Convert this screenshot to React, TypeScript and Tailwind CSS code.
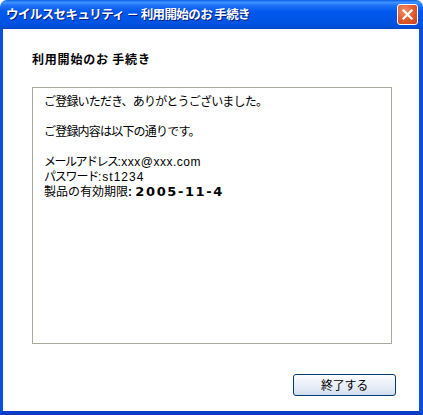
import React from "react";

const font = '"MS UI Gothic", "Noto Sans CJK JP", "Noto Sans", sans-serif';
const latin = '"Liberation Sans", "Noto Sans CJK JP", sans-serif';
const boldLatin = '"DejaVu Sans", "Liberation Sans", sans-serif';

export default function App() {
  return (
    <div className="w-[423px] h-[415px] flex flex-col bg-white" style={{ fontFamily: font }}>
      {/* Title bar */}
      <div className="h-[29px] shrink-0 rounded-t-[7px] flex items-center justify-between pl-[6px] pr-[5px] bg-[linear-gradient(to_bottom,#0a5ce8_0%,#3f94ff_8%,#1c6ff5_20%,#0058ee_40%,#0055e6_70%,#0050dc_90%,#0845c4_100%)]">
        <span className="text-white font-bold text-[12.5px] tracking-[-0.6px] [text-shadow:1px_1px_0_#0a1e7a] whitespace-pre">
          ウイルスセキュリティ － 利用開始のお 手続き
        </span>
        <div className="w-[21px] h-[21px] rounded-[3px] border border-white flex items-center justify-center bg-[radial-gradient(circle_at_35%_30%,#f0906a_0%,#e0582c_55%,#c7401a_100%)]">
          <svg width="13" height="13" viewBox="0 0 13 13">
            <path d="M2.5 2.5 L10.5 10.5 M10.5 2.5 L2.5 10.5" stroke="white" strokeWidth="2.2" strokeLinecap="square" />
          </svg>
        </div>
      </div>
      {/* Body */}
      <div className="flex-1 flex flex-col border-l-[3px] border-r-[4px] border-b-[4px] border-l-[#0b4fe0] border-r-[#0b4fe0] border-b-[#0a3cc4] bg-white">
        <div className="pl-[29px] pt-[22px] text-[12px] leading-[15px] font-bold text-black tracking-[0.8px] whitespace-pre">
          利用開始のお 手続き
        </div>
        <div className="ml-[29px] mt-[21px] w-[360px] h-[257px] border border-[#aca899] pt-[5px] pl-[11px] text-[12px] leading-[15px] text-black tracking-[-0.8px]">
          <div>ご登録いただき、ありがとうございました。</div>
          <div className="h-[15px]" />
          <div>ご登録内容は以下の通りです。</div>
          <div className="h-[15px]" />
          <div className="h-[15px] whitespace-nowrap">
            <span className="tracking-[-1.5px]">メールアドレス</span>
            <span className="tracking-[0.5px]" style={{ fontFamily: latin }}>:xxx@xxx.com</span>
          </div>
          <div className="h-[15px] whitespace-nowrap">
            <span className="tracking-[-1.2px]">パスワード</span>
            <span className="tracking-[1px]" style={{ fontFamily: latin }}>:st1234</span>
          </div>
          <div className="h-[15px] whitespace-nowrap">
            <span className="tracking-[0px]">製品の有効期限</span>
            <span className="font-bold tracking-[0px]" style={{ fontFamily: latin }}>: </span>
            <span className="font-bold text-[13px] tracking-[1.6px]" style={{ fontFamily: boldLatin }}>2005-11-4</span>
          </div>
        </div>
        <div className="flex justify-end pr-[23px] mt-[30px]">
          <button className="w-[103px] h-[22px] rounded-[3px] border border-[#003c74] bg-[linear-gradient(to_bottom,#ffffff_0%,#f0f3fa_30%,#e3eaf6_70%,#cfdaee_100%)] text-[12px] text-black flex items-center justify-center tracking-[-0.3px]">
            終了する
          </button>
        </div>
      </div>
    </div>
  );
}
